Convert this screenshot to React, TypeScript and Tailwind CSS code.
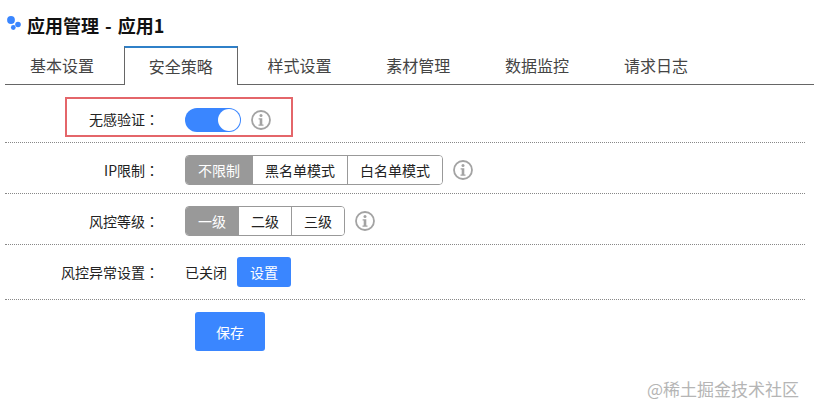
const fontStack = "font-['Noto_Sans_CJK_SC','Noto_Sans',sans-serif]";

function InfoIcon() {
  return (
    <svg width="20" height="20" viewBox="0 0 20 20" fill="none" className="shrink-0">
      <circle cx="10" cy="10" r="9" stroke="#a3a3a3" strokeWidth="1.8" />
      <circle cx="10" cy="5.6" r="1.5" fill="#a3a3a3" />
      <path d="M7.6 8.2h3.7v6.2h1.2v1.3H7.5v-1.3h1.2V9.5H7.6z" fill="#a3a3a3" />
    </svg>
  );
}

function Logo() {
  return (
    <svg width="14" height="14" viewBox="0 0 14 14" className="mb-[4px] shrink-0">
      <circle cx="4" cy="4" r="3.9" fill="#3a86ff" />
      <circle cx="11" cy="8.5" r="2.8" fill="#3a86ff" />
      <circle cx="6.3" cy="11.5" r="2.4" fill="#3a86ff" />
    </svg>
  );
}

function Label({ text, className }: { text: string; className: string }) {
  return (
    <span className={`text-right text-sm text-[#222] ${className}`}>
      {text}
      <span className="font-['Noto_Sans_CJK_TC',sans-serif]">：</span>
    </span>
  );
}

function Segmented({ items, widths }: { items: string[]; widths: string[] }) {
  return (
    <div className="flex h-[30px] overflow-hidden rounded-[4px] border border-[#999]">
      {items.map((item, i) => (
        <div
          key={item}
          className={`flex items-center justify-center text-sm ${widths[i]} ${i > 0 ? 'border-l border-[#999]' : ''} ${i === 0 ? 'bg-[#999] text-white' : 'bg-white text-[#222]'}`}
        >
          {item}
        </div>
      ))}
    </div>
  );
}

const tabs = ['基本设置', '安全策略', '样式设置', '素材管理', '数据监控', '请求日志'];

export default function App() {
  return (
    <div className={`relative h-[413px] w-[814px] overflow-hidden bg-white ${fontStack}`}>
      <div className="flex h-[46px] items-center gap-[6px] pl-[7px] pt-[4px]">
        <Logo />
        <h1 className="text-lg font-bold text-[#111] [word-spacing:2px]">应用管理 - 应用1</h1>
      </div>

      <div className="ml-[5px] flex h-[39px] border-b border-[#666]">
        {tabs.map((tab, i) => (
          <div
            key={tab}
            className={
              i === 1
                ? 'relative z-10 mr-[5px] flex h-[39px] w-[113.8px] items-center justify-center border-x border-t-2 border-x-[#666] border-t-[#2f80c8] bg-white pb-[2px] text-base text-[#444]'
                : 'mr-[5px] flex h-[38px] w-[113.8px] items-center justify-center text-base text-[#444]'
            }
          >
            {tab}
          </div>
        ))}
      </div>

      <div className="ml-[5px] w-[800px]">
        <div className="border-b border-dotted border-[#888] pb-[5px] pt-3">
          <div className="ml-[60px] flex h-[40px] w-[228px] items-center border-2 border-[#e4666a] pt-[6px]">
            <Label text="无感验证" className="-mt-[2px] w-[92px]" />
            <div className="ml-[26px] flex h-[24px] w-[56px] items-center justify-end rounded-full bg-[#3a86ff] pr-[1px]">
              <div className="h-[22px] w-[22px] rounded-full bg-white" />
            </div>
            <div className="ml-[10px]">
              <InfoIcon />
            </div>
          </div>
        </div>

        <div className="flex items-center border-b border-dotted border-[#888] pb-2 pt-3">
          <Label text="IP限制" className="w-[154px]" />
          <div className="ml-[26px]">
            <Segmented items={['不限制', '黑名单模式', '白名单模式']} widths={['w-[66px]', 'w-[95px]', 'w-[95px]']} />
          </div>
          <div className="ml-[10px]">
            <InfoIcon />
          </div>
        </div>

        <div className="flex items-center border-b border-dotted border-[#888] pb-2 pt-3">
          <Label text="风控等级" className="w-[154px]" />
          <div className="ml-[26px]">
            <Segmented items={['一级', '二级', '三级']} widths={['w-[52px]', 'w-[53px]', 'w-[53px]']} />
          </div>
          <div className="ml-[10px]">
            <InfoIcon />
          </div>
        </div>

        <div className="flex items-center border-b border-dotted border-[#888] py-3">
          <Label text="风控异常设置" className="w-[154px]" />
          <span className="ml-[26px] w-[42px] text-sm text-[#222]">已关闭</span>
          <button className="ml-[10px] h-[30px] w-[54px] rounded-[3px] bg-[#3a86ff] text-sm text-white">设置</button>
        </div>

        <button className="ml-[190px] mt-3 h-[39px] w-[70px] rounded-[3px] bg-[#3a86ff] text-sm text-white">保存</button>
      </div>

      <div className="absolute left-[647px] top-[377px] text-[17px] leading-6 text-[#b5b5b5]">@稀土掘金技术社区</div>
    </div>
  );
}
